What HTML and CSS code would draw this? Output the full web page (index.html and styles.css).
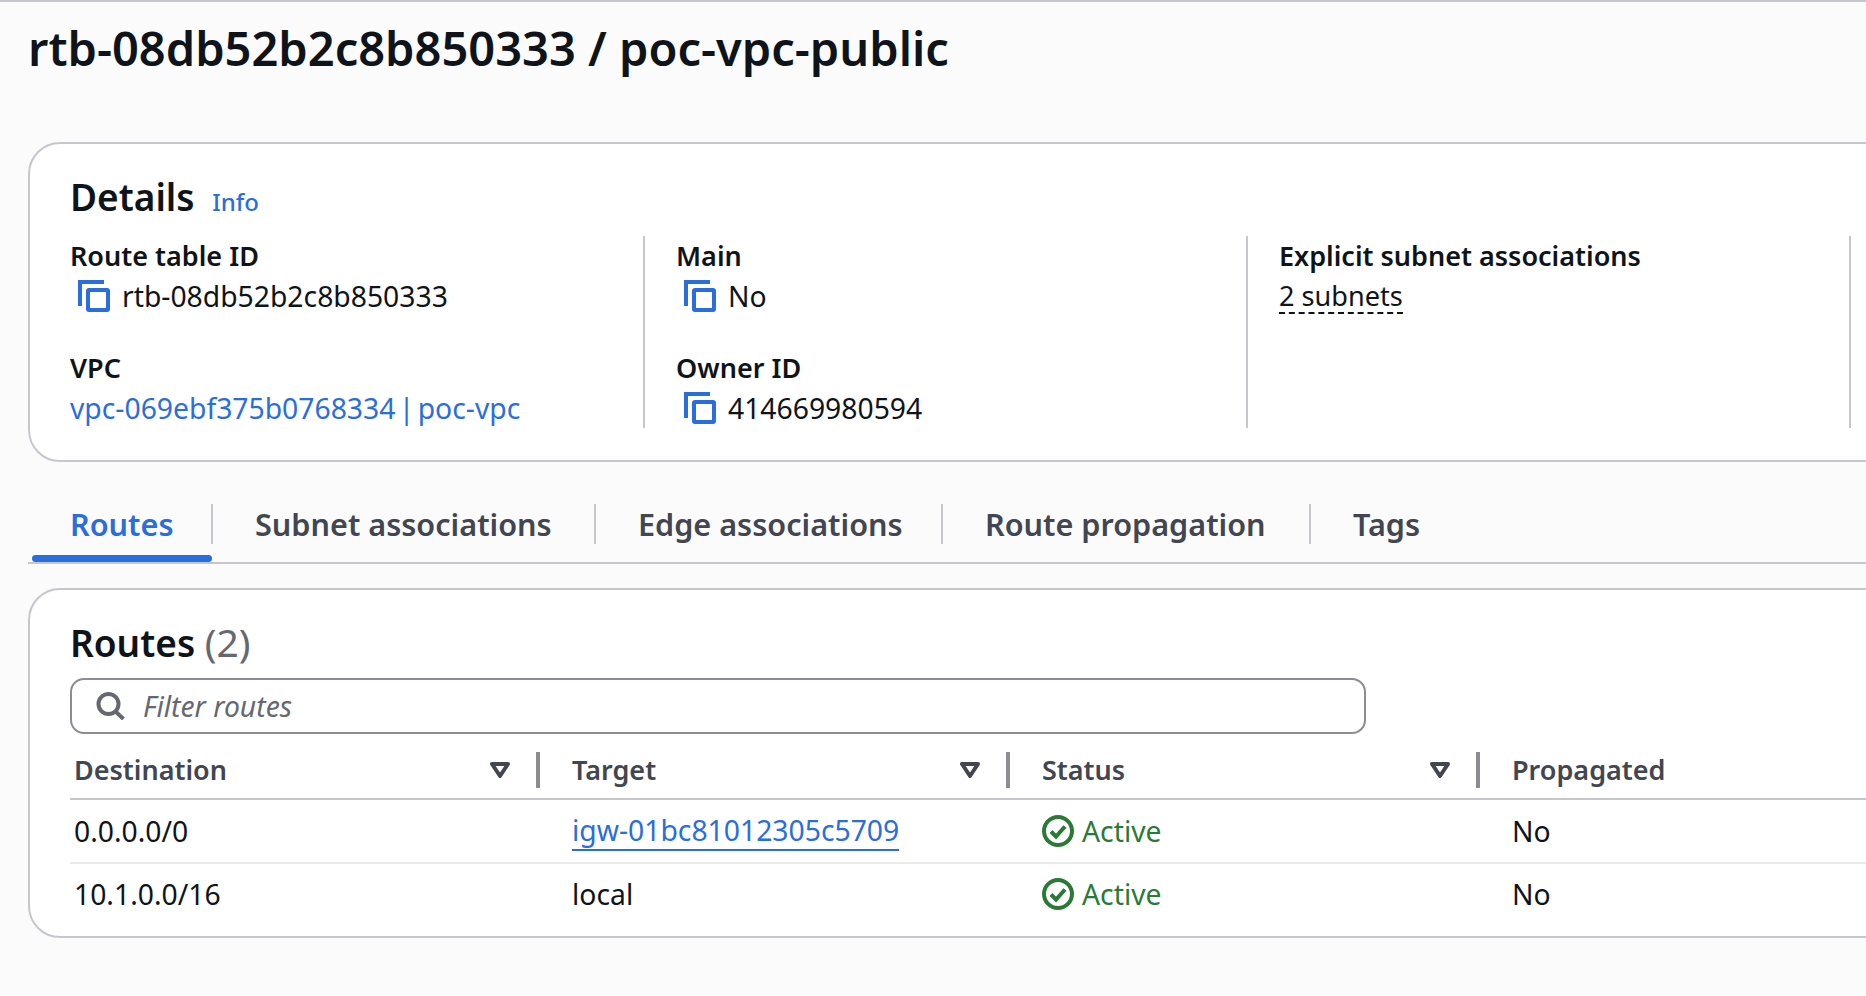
FILE: index.html
```html
<!DOCTYPE html>
<html lang="en">
<head>
<meta charset="utf-8">
<title>rtb-08db52b2c8b850333 / poc-vpc-public</title>
<link rel="stylesheet" href="styles.css">
</head>
<body>
<svg class="sprite" width="0" height="0" aria-hidden="true">
  <symbol id="copy" viewBox="0 0 32 32"><path d="M2 26V2h24" fill="none" stroke="currentColor" stroke-width="4"/><rect x="10" y="10" width="20" height="20" rx="1" fill="none" stroke="currentColor" stroke-width="4"/></symbol>
  <symbol id="check" viewBox="0 0 32 32"><circle cx="16" cy="16" r="14" fill="none" stroke="currentColor" stroke-width="4"/><path d="M9 16.5l5 5 9-10" fill="none" stroke="currentColor" stroke-width="4"/></symbol>
  <symbol id="tri" viewBox="0 0 20 16"><path d="M2 2h16l-8 12z" fill="none" stroke="currentColor" stroke-width="4" stroke-linejoin="round"/></symbol>
</svg>
<main class="page">
  <h1 class="title">rtb-08db52b2c8b850333 / poc-vpc-public</h1>

  <section class="card details">
    <h2 class="heading">Details <a class="info">Info</a></h2>
    <div class="columns">
      <div class="col">
        <div class="pair"><div class="label">Route table ID</div><div class="value"><svg class="copy"><use href="#copy"/></svg>rtb-08db52b2c8b850333</div></div>
        <div class="pair"><div class="label">VPC</div><div class="value"><a class="link vpc">vpc-069ebf375b0768334 | poc-vpc</a></div></div>
      </div>
      <div class="col">
        <div class="pair"><div class="label">Main</div><div class="value"><svg class="copy"><use href="#copy"/></svg>No</div></div>
        <div class="pair"><div class="label">Owner ID</div><div class="value"><svg class="copy"><use href="#copy"/></svg>414669980594</div></div>
      </div>
      <div class="col">
        <div class="pair"><div class="label">Explicit subnet associations</div><div class="value"><span class="dashed">2 subnets</span></div></div>
      </div>
      <div class="col"></div>
    </div>
  </section>

  <nav class="tabs">
    <div class="tab active"><span class="tab-label">Routes</span></div>
    <div class="tab subnet"><span class="tab-label">Subnet associations</span></div>
    <div class="tab edge"><span class="tab-label">Edge associations</span></div>
    <div class="tab propagation"><span class="tab-label">Route propagation</span></div>
    <div class="tab"><span class="tab-label last">Tags</span></div>
  </nav>

  <section class="card routes">
    <h2 class="heading">Routes <span class="count">(2)</span></h2>
    <div class="filter">
      <svg class="search" viewBox="0 0 30 28"><circle cx="12.5" cy="12" r="10" fill="none" stroke="currentColor" stroke-width="4"/><path d="M19.5 19.5l8 7.5" fill="none" stroke="currentColor" stroke-width="4"/></svg>
      <span class="placeholder">Filter routes</span>
    </div>
    <div class="grid head">
      <div class="th">Destination<svg class="tri"><use href="#tri"/></svg><i class="resizer"></i></div>
      <div class="th">Target<svg class="tri"><use href="#tri"/></svg><i class="resizer"></i></div>
      <div class="th">Status<svg class="tri"><use href="#tri"/></svg><i class="resizer"></i></div>
      <div class="th">Propagated</div>
    </div>
    <div class="grid row">
      <div class="td">0.0.0.0/0</div>
      <div class="td"><a class="link under">igw-01bc81012305c5709</a></div>
      <div class="td active-status"><svg class="check"><use href="#check"/></svg>Active</div>
      <div class="td">No</div>
    </div>
    <div class="grid row final">
      <div class="td">10.1.0.0/16</div>
      <div class="td">local</div>
      <div class="td active-status"><svg class="check"><use href="#check"/></svg>Active</div>
      <div class="td">No</div>
    </div>
  </section>
</main>
</body>
</html>
```
FILE: styles.css
```css
html, body { margin: 0; height: 100%; overflow: hidden; }
body {
  background: #fbfbfc;
  color: #0f141a;
  font-family: "Noto Sans", "Open Sans", sans-serif;
  font-size: 28.3px;
  line-height: 40px;
}
.sprite { position: absolute; }
.page {
  box-sizing: border-box;
  width: 1960px;
  height: 996px;
  border-top: 2px solid #c6c6cd;
  padding: 0 0 0 28px;
}
.title {
  margin: 0;
  padding-top: 19px;
  height: 140px;
  box-sizing: border-box;
  font-size: 47px;
  line-height: 54px;
  font-weight: 600;
}
.card {
  background: #fff;
  border: 2px solid #c6c6cd;
  border-radius: 32px;
  padding-left: 40px;
}
.details { height: 320px; box-sizing: border-box; padding-top: 29px; }
.heading {
  margin: 0;
  font-size: 37px;
  line-height: 48px;
  font-weight: 600;
}
.count { color: #656871; font-weight: 400; font-size: 39px; }
.info { color: #2a6edb; font-size: 24px; font-weight: 500; margin-left: 8px; }
.columns { display: flex; margin-top: 10px; }
.col {
  flex: none;
  width: 603px;
  box-sizing: border-box;
  padding-left: 31px;
  border-left: 2px solid #c6c6cd;
  height: 192px;
  display: flex;
  flex-direction: column;
  gap: 32px;
}
.col:first-child { width: 573px; padding-left: 0; border-left: 0; }
.label { font-weight: 600; font-size: 27px; }
.value { display: flex; align-items: center; height: 40px; }
.copy { width: 32px; height: 32px; color: #2a6edb; margin: 0 12px 0 8px; flex: none; }
.link { color: #2a6edb; }
.vpc { word-spacing: -4px; }
.dashed { border-bottom: 2px dashed #0f141a; font-size: 27.1px; line-height: 32px; margin-top: 2px; }
.tabs { display: flex; height: 102px; box-sizing: border-box; padding: 42px 0 0 4px; border-bottom: 2px solid #c6c6cd; }
.tab { display: flex; flex-direction: column; height: 58px; }
.active { width: 181px; }
.subnet { width: 383px; }
.edge { width: 347px; }
.propagation { width: 368px; }
.tab-label {
  box-sizing: border-box;
  height: 40px;
  line-height: 40px;
  padding: 0 0 0 42px;
  border-right: 2px solid #c6c6cd;
  font-size: 30.6px;
  font-weight: 600;
  color: #424650;
}
.tab-label.last { border-right: 0; }
.active .tab-label { color: #2a6edb; padding-left: 38px; }
.active::after { content: ""; height: 8px; margin: 11px 1px 0 0; background: #2a6edb; border-radius: 4px; }
.routes { margin-top: 24px; height: 350px; box-sizing: border-box; padding-top: 28px; }
.filter {
  box-sizing: border-box;
  width: 1296px;
  height: 56px;
  margin-top: 11px;
  border: 2px solid #8c8c94;
  border-radius: 14px;
  display: flex;
  align-items: center;
  padding-left: 24px;
}
.search { width: 30px; height: 28px; color: #656871; margin-right: 17px; }
.placeholder { color: #656871; font-style: italic; }
.grid { display: grid; grid-template-columns: 470px 470px 470px 1fr; }
.head { margin-top: 18px; height: 46px; border-bottom: 2px solid #c6c6cd; }
.th {
  position: relative;
  height: 36px;
  display: flex;
  align-items: center;
  padding-left: 32px;
  color: #424650;
  font-weight: 600;
  font-size: 27px;
}
.th:first-child { padding-left: 4px; }
.tri { position: absolute; right: 30px; top: 10px; width: 20px; height: 16px; color: #424650; }
.resizer { position: absolute; right: 0; top: 0; width: 4px; height: 36px; background: #8c8c94; }
.row { height: 62px; align-items: center; border-bottom: 2px solid #e9ebed; }
.row.final { height: 60px; border-bottom: 0; }
.td { padding-left: 32px; display: flex; align-items: center; }
.td:first-child { padding-left: 4px; }
.under { border-bottom: 2px solid #2a6edb; line-height: 38px; }
.active-status { color: #2a7a36; }
.check { width: 32px; height: 32px; margin-right: 8px; flex: none; }
```
